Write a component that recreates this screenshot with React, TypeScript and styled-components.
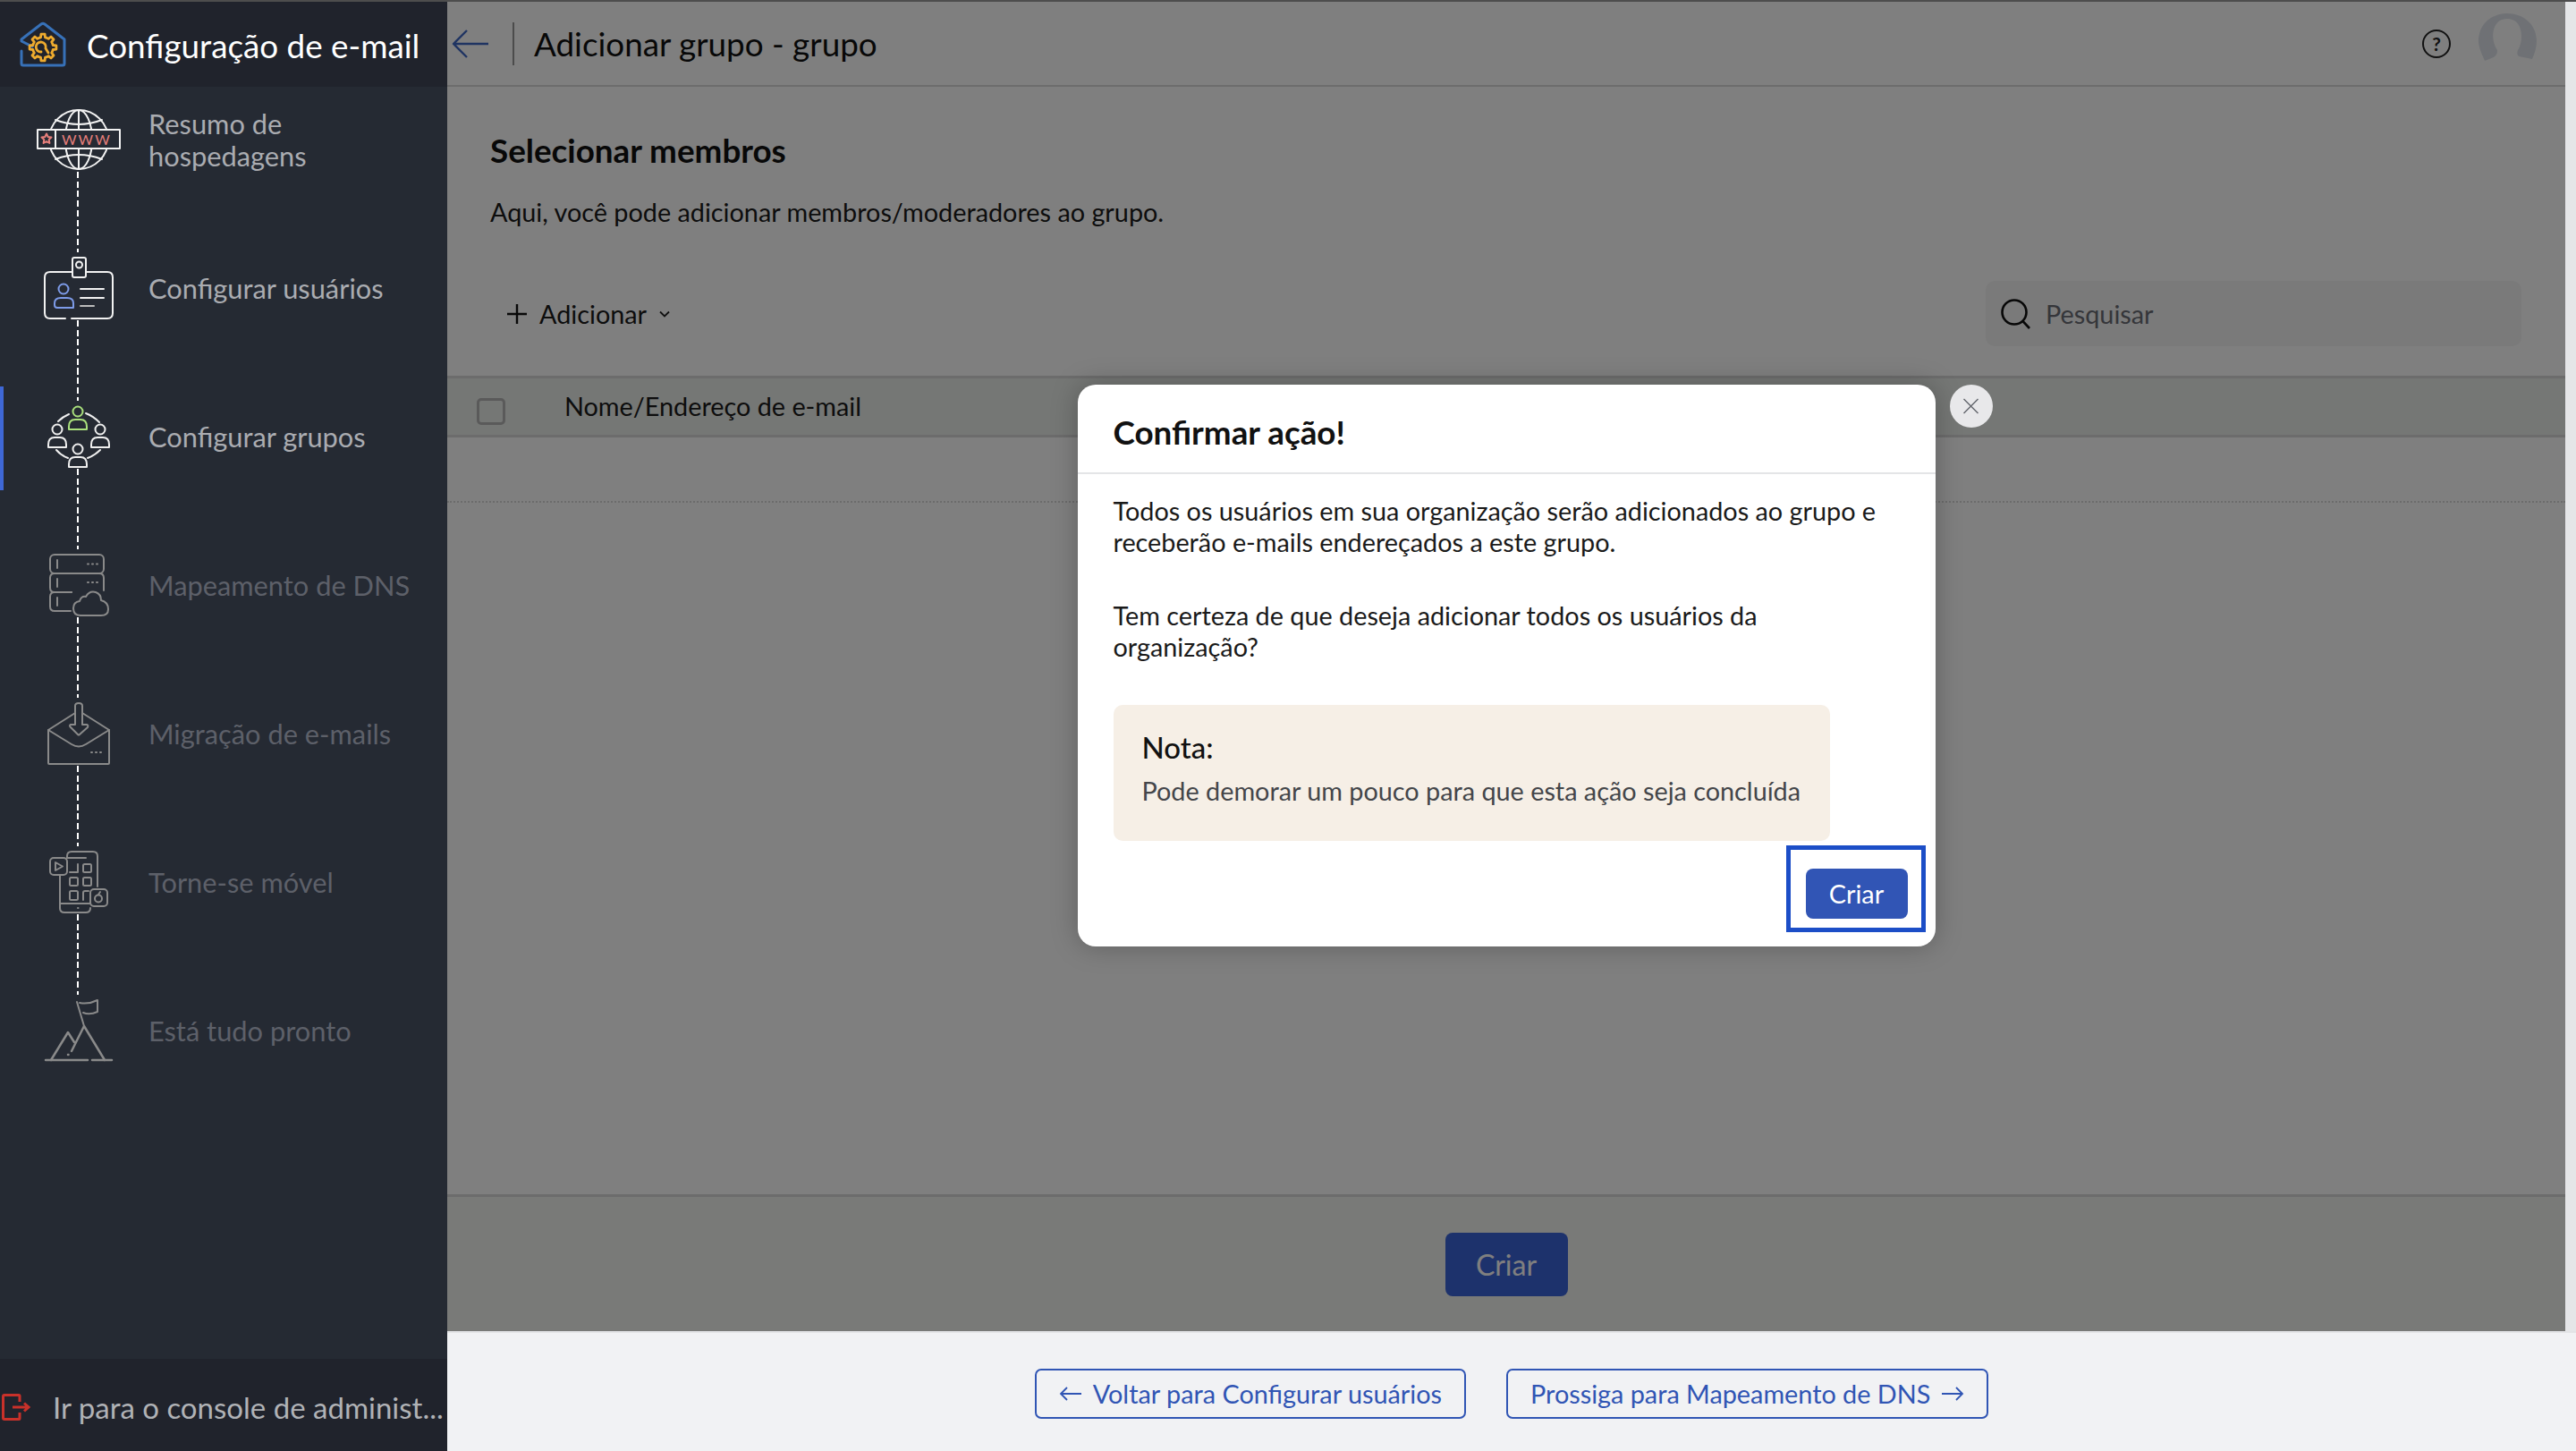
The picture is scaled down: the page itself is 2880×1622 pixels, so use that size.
import React from "react";
import styled, { createGlobalStyle } from "styled-components";

// gear outline for the logo, teeth are just a polygon around the centre
const gearPath = (cx: number, cy: number, outer: number, inner: number, teeth: number) => {
  const step = (Math.PI * 2) / teeth;
  const parts: string[] = [];
  for (let i = 0; i < teeth; i++) {
    const a = i * step - Math.PI / 2;
    const pts: [number, number][] = [
      [inner, a - step * 0.5],
      [inner, a - step * 0.28],
      [outer, a - step * 0.18],
      [outer, a + step * 0.18],
      [inner, a + step * 0.28],
    ];
    pts.forEach(([r, t]) => {
      const x = (cx + Math.cos(t) * r).toFixed(1);
      const y = (cy + Math.sin(t) * r).toFixed(1);
      parts.push(`${parts.length === 0 ? "M" : "L"}${x} ${y}`);
    });
  }
  return parts.join(" ") + " Z";
};

const Logo = () => (
  <LogoSvg viewBox="20 22 56 56">
    <path
      d="M36 52 L24 46 V44 L46 27 Q48 25.500 50 27 L72 44 V71 Q72 73 70 73 H26 Q24 73 24 71 V57"
      stroke="#3771b8"
      strokeWidth="3"
      strokeLinecap="round"
      strokeLinejoin="round"
    />
    <path d={gearPath(48, 53, 15, 11.500, 8)} stroke="#eeab2e" strokeWidth="2.800" strokeLinejoin="round" />
    <path d="M54 59 L51 54 A5.500 5.500 0 1 0 46 58" stroke="#eeab2e" strokeWidth="2.800" strokeLinecap="round" />
  </LogoSvg>
);

const GlobeIcon = () => (
  <StepSvg viewBox="0 0 100 100" $stroke="#f2f2f2">
    <circle cx="51" cy="48" r="33" />
    <ellipse cx="51" cy="48" rx="15" ry="33" />
    <path d="M51 15 V37 M51 58 V81" />
    <path d="M25 26 Q51 36 77 26 M25 70 Q51 60 77 70" />
    <rect x="5" y="37" width="92" height="21" fill="#252a33" />
    <path d="M25 37 V58" />
    <path
      d="M15 41.500 L16.700 45 L20.500 45.500 L17.700 48.100 L18.400 52 L15 50.100 L11.600 52 L12.300 48.100 L9.500 45.500 L13.300 45 Z"
      stroke="#e67f7b"
    />
    <WwwText x="32" y="53.500">
      WWW
    </WwwText>
  </StepSvg>
);

const CardIcon = () => (
  <StepSvg viewBox="0 0 100 100" $stroke="#f2f2f2">
    <path d="M36 82 H19 Q13 82 13 76 V36 Q13 30 19 30 H44 M59 30 H83 Q89 30 89 36 V76 Q89 82 83 82 H43" />
    <rect x="44" y="14" width="15" height="22" rx="2" />
    <circle cx="51.500" cy="22" r="3.500" />
    <g stroke="#7d9be8">
      <circle cx="34" cy="49" r="5.500" />
      <path d="M24 66 V65 Q24 59 31 59 H38 Q45 59 45 65 V70 H27 Q24 70 24 67 Z" />
    </g>
    <path d="M53 49 H79 M53 59 H79" />
    <path d="M53 68 H68" stroke="#bcbcbc" />
  </StepSvg>
);

const Person = ({ x, y, stroke }: { x: number; y: number; stroke?: string }) => (
  <g stroke={stroke}>
    <circle cx={x} cy={y} r="5.500" />
    <path
      d={`M${x - 10} ${y + 17} Q${x - 10} ${y + 9} ${x - 3} ${y + 9} H${x + 3} Q${x + 10} ${y + 9} ${x + 10} ${y + 17} V${
        y + 20
      } H${x - 10} Z`}
    />
  </g>
);

const GroupIcon = () => (
  <StepSvg viewBox="0 0 100 100" $stroke="#efefef">
    <Person x={50} y={20} stroke="#a9e07c" />
    <Person x={27} y={40} />
    <Person x={75} y={40} />
    <Person x={50} y={62} />
    <path d="M28 31 Q33 26 40 23 M59 22 Q67 25 74 32 M26 63 Q31 69 39 72 M61 72 Q69 69 75 63" />
  </StepSvg>
);

const ServerIcon = () => (
  <StepSvg viewBox="0 0 100 100" $stroke="#8a8a8a">
    <rect x="19" y="14" width="60" height="21" rx="5" />
    <path d="M43 56 H24 Q19 56 19 51 V40 Q19 35 24 35 H74 Q79 35 79 40 V54" />
    <path d="M43 56 H24 Q19 56 19 61 V72 Q19 77 24 77 H42" />
    <path d="M27 20 V29 M27 41 V50 M27 62 V71" />
    <path d="M61 24.500 H62 M66 24.500 H67 M71 24.500 H72 M61 45 H62 M66 45 H67 M71 45 H72" />
    <path
      d="M53 82 Q45 82 45 74 Q45 67 52 66 Q54 60 59 61 Q63 54 70 56 Q76 58 76 65 Q84 67 84 75 Q84 82 76 82 Z"
      fill="#252a33"
    />
  </StepSvg>
);

const MailIcon = () => (
  <StepSvg viewBox="0 0 100 100" $stroke="#8a8a8a">
    <path d="M47 25 L17 44 V81 Q17 82 18 82 H84 Q85 82 85 81 V44 L55 25" />
    <path d="M17 44 L43 60 Q51 65 59 60 L85 44" />
    <path d="M47 38 V17 Q47 14 51 14 Q55 14 55 17 V38 H60 Q62 39 61 41 L52 49 Q51 50 50 49 L42 41 Q40 39 42 38 Z" fill="#252a33" />
    <path d="M65 69 H66 M70 69 H71 M75 69 H76" />
  </StepSvg>
);

const MobileIcon = () => (
  <StepSvg viewBox="0 0 100 100" $stroke="#8a8a8a">
    <path d="M38 21 V19 Q38 14 43 14 H67 Q72 14 72 19 V53 M64 77 Q64 82 59 82 H35 Q30 82 30 77 V40" />
    <path d="M30 72 H64" />
    <path d="M38 21 H59" />
    <rect x="19" y="21" width="19" height="19" rx="4" />
    <path d="M25 26 V35 L33 30.500 Z" />
    <path d="M41 37 H50 V28" />
    <rect x="56" y="28" width="9" height="9" rx="1.500" />
    <rect x="41" y="43" width="9" height="9" rx="1.500" />
    <rect x="56" y="43" width="9" height="9" rx="1.500" />
    <rect x="41" y="58" width="9" height="10" rx="1.500" />
    <path d="M56 68 V60 Q56 58 58 58 H62" />
    <rect x="64" y="56" width="19" height="19" rx="4" />
    <circle cx="73" cy="66.500" r="4" />
    <path d="M73 62 L75 59" />
    <path d="M50 77 H50.500" />
  </StepSvg>
);

const FlagIcon = () => (
  <StepSvg viewBox="0 0 100 100" $stroke="#8a8a8a">
    <path d="M14 81 H61 M66 81 H88" strokeWidth="2.500" />
    <path d="M43 71 L57 43 L80 81" strokeWidth="2.500" />
    <path d="M20 81 L39 50 L46 61" strokeWidth="2.500" />
    <path d="M39 75 H39.500" strokeWidth="2.500" />
    <path d="M49 16 L57 43" />
    <path d="M52 17 Q62 19 72 14 V27 Q63 31 56 28" />
  </StepSvg>
);

const steps = [
  { label: "Resumo de hospedagens", icon: <GlobeIcon />, muted: false },
  { label: "Configurar usuários", icon: <CardIcon />, muted: false },
  { label: "Configurar grupos", icon: <GroupIcon />, muted: false, active: true },
  { label: "Mapeamento de DNS", icon: <ServerIcon />, muted: true },
  { label: "Migração de e-mails", icon: <MailIcon />, muted: true },
  { label: "Torne-se móvel", icon: <MobileIcon />, muted: true },
  { label: "Está tudo pronto", icon: <FlagIcon />, muted: true, last: true },
];

export default function App() {
  return (
    <>
      <GlobalStyle />
      <TopStrip />
      <Shell>
        <Sidebar>
          <SidebarHeader>
            <Logo />
            <SidebarTitle>Configuração de e-mail</SidebarTitle>
          </SidebarHeader>
          <StepList>
            {steps.map((step) => (
              <Step key={step.label} $active={step.active} $last={step.last}>
                {step.icon}
                <StepLabel $muted={step.muted}>{step.label}</StepLabel>
              </Step>
            ))}
          </StepList>
          <SidebarFooter>
            <ExitSvg viewBox="0 0 33 30">
              <path d="M20 9 V2.500 Q20 1.500 19 1.500 H3 Q1.500 1.500 1.500 3 V27 Q1.500 28.500 3 28.500 H19 Q20 28.500 20 27.500 V21" stroke="#c8312a" strokeWidth="3" />
              <path d="M12 15 H30 M25 10.500 L30 15 L25 19.500" stroke="#c8312a" strokeWidth="3" />
            </ExitSvg>
            <ExitLabel>Ir para o console de administ...</ExitLabel>
          </SidebarFooter>
        </Sidebar>

        <RightColumn>
          <MainRow>
            <Main>
              <TopBar>
                <BackSvg viewBox="0 0 42 32">
                  <path d="M41 16 H2 M17 1 L2 16 L17 31" stroke="#3f68c4" strokeWidth="2.400" strokeLinejoin="round" />
                </BackSvg>
                <TopDivider />
                <PageTitle>Adicionar grupo - grupo</PageTitle>
                <TopActions>
                  <HelpBadge>?</HelpBadge>
                  <AvatarSvg viewBox="0 0 65 58">
                    <path
                      d="M7 53 C2 42 0 36 0 31 C0 12 14 0 32 0 C50 0 65 12 65 31 C65 38 63 44 60 51 L45 48 C43 46 43 44 44 41 C51 30 50 6 32 6 C14 6 13 30 21 41 C21 45 20 47 17 49 Z"
                      fill="#dfe3ea"
                    />
                  </AvatarSvg>
                </TopActions>
              </TopBar>

              <Section>
                <SectionTitle>Selecionar membros</SectionTitle>
                <SectionText>Aqui, você pode adicionar membros/moderadores ao grupo.</SectionText>
              </Section>

              <Toolbar>
                <AddButton>
                  <PlusSvg viewBox="0 0 22 22">
                    <path d="M11 0 V22 M0 11 H22" stroke="#111" strokeWidth="2.400" />
                  </PlusSvg>
                  Adicionar
                  <CaretSvg viewBox="0 0 12 8">
                    <path d="M1 1.500 L6 6.500 L11 1.500" stroke="#222" strokeWidth="1.800" />
                  </CaretSvg>
                </AddButton>
                <SearchBox>
                  <SearchSvg viewBox="0 0 34 34">
                    <circle cx="15" cy="15" r="13.500" stroke="#111" strokeWidth="2.600" />
                    <path d="M24.500 25 L32 33" stroke="#111" strokeWidth="2.600" />
                  </SearchSvg>
                  <SearchHint>Pesquisar</SearchHint>
                </SearchBox>
              </Toolbar>

              <TableHead>
                <CheckBox />
                <ColumnName>Nome/Endereço de e-mail</ColumnName>
              </TableHead>
              <EmptyRow />

              <ActionBar>
                <PrimaryDim>Criar</PrimaryDim>
              </ActionBar>

              <Overlay>
                <Modal>
                  <CloseButton>
                    <svg viewBox="0 0 18 18" width="19" height="18" fill="none">
                      <path d="M1 1 L17 17 M17 1 L1 17" stroke="#62656b" strokeWidth="1.400" />
                    </svg>
                  </CloseButton>
                  <ModalHeader>Confirmar ação!</ModalHeader>
                  <ModalBody>
                    <Paragraph>
                      Todos os usuários em sua organização serão adicionados ao grupo e receberão e-mails endereçados a
                      este grupo.
                    </Paragraph>
                    <Paragraph>Tem certeza de que deseja adicionar todos os usuários da organização?</Paragraph>
                    <Note>
                      <NoteTitle>Nota:</NoteTitle>
                      <NoteText>Pode demorar um pouco para que esta ação seja concluída</NoteText>
                    </Note>
                    <ModalActions>
                      <Highlighted>
                        <PrimaryButton>Criar</PrimaryButton>
                      </Highlighted>
                    </ModalActions>
                  </ModalBody>
                </Modal>
              </Overlay>
            </Main>
            <ScrollTrack />
          </MainRow>

          <WizardFooter>
            <OutlineButton>
              <ArrowSvg viewBox="0 0 26 18">
                <path d="M25 9 H2 M9 2 L2 9 L9 16" stroke="#3055b4" strokeWidth="1.800" />
              </ArrowSvg>
              Voltar para Configurar usuários
            </OutlineButton>
            <OutlineButton>
              Prossiga para Mapeamento de DNS
              <ArrowSvg viewBox="0 0 26 18">
                <path d="M1 9 H24 M17 2 L24 9 L17 16" stroke="#3055b4" strokeWidth="1.800" />
              </ArrowSvg>
            </OutlineButton>
          </WizardFooter>
        </RightColumn>
      </Shell>
    </>
  );
}

const GlobalStyle = createGlobalStyle`
  html, body {
    margin: 0;
    padding: 0;
    background: #f1f2f4;
  }
  body {
    font-family: Lato, "Noto Sans", "Liberation Sans", sans-serif;
    overflow: hidden;
  }
  * {
    box-sizing: border-box;
  }
`;

const TopStrip = styled.div`
  height: 2px;
  background: #4d4d4d;
`;

const Shell = styled.div`
  display: flex;
  height: 1620px;
`;

// sidebar

const Sidebar = styled.aside`
  display: flex;
  flex-direction: column;
  width: 500px;
  flex-shrink: 0;
  background: #252a33;
`;

const SidebarHeader = styled.div`
  display: flex;
  align-items: center;
  gap: 21px;
  height: 95px;
  padding-left: 20px;
  background: #20232c;
`;

const LogoSvg = styled.svg`
  width: 56px;
  height: 56px;
  fill: none;
  flex-shrink: 0;
`;

const SidebarTitle = styled.div`
  font-size: 36.800px;
  color: #fff;
  padding-top: 2px;
  white-space: nowrap;
`;

const StepList = styled.div`
  flex: 1;
  display: flex;
  flex-direction: column;
  gap: 50px;
  padding-top: 3px;
`;

const Step = styled.div<{ $active?: boolean; $last?: boolean }>`
  position: relative;
  display: flex;
  align-items: center;
  gap: 29px;
  height: 116px;
  border-left: ${(p) => (p.$active ? "4px solid #3f68d6" : "0")};
  padding-left: ${(p) => (p.$active ? "33px" : "37px")};

  &::after {
    content: ${(p) => (p.$last ? "none" : '""')};
    position: absolute;
    left: 86px;
    top: 92px;
    width: 2px;
    height: 90px;
    margin-left: ${(p) => (p.$active ? "-4px" : "0")};
    background: repeating-linear-gradient(to bottom, #fff 0 7px, transparent 7px 10.700px);
  }
`;

const StepSvg = styled.svg<{ $stroke: string }>`
  width: 100px;
  height: 100px;
  flex-shrink: 0;
  fill: none;
  stroke: ${(p) => p.$stroke};
  stroke-width: 2;
  stroke-linecap: round;
  stroke-linejoin: round;
`;

const WwwText = styled.text`
  font-family: Lato, sans-serif;
  font-size: 16px;
  font-weight: 400;
  letter-spacing: 2px;
  fill: #e67f7b;
  stroke: none;
`;

const StepLabel = styled.div<{ $muted?: boolean }>`
  width: 300px;
  margin-top: -2px;
  font-size: 30.800px;
  line-height: 36px;
  color: ${(p) => (p.$muted ? "#5d6069" : "#aaacb1")};
`;

const SidebarFooter = styled.div`
  display: flex;
  align-items: center;
  gap: 24px;
  height: 103px;
  padding: 4px 0 0 2px;
  background: #20232c;
`;

const ExitSvg = styled.svg`
  width: 33px;
  height: 30px;
  fill: none;
  flex-shrink: 0;
`;

const ExitLabel = styled.div`
  font-size: 33px;
  color: #b0b2b6;
  white-space: nowrap;
`;

// main column

const RightColumn = styled.div`
  flex: 1;
  display: flex;
  flex-direction: column;
  min-width: 0;
`;

const MainRow = styled.div`
  flex: 1;
  display: flex;
  min-height: 0;
`;

const Main = styled.main`
  position: relative;
  flex: 1;
  display: flex;
  flex-direction: column;
  background: #fff;
  min-width: 0;
`;

const ScrollTrack = styled.div`
  width: 12px;
  background: #e5e6e8;
`;

const TopBar = styled.header`
  display: flex;
  align-items: center;
  height: 95px;
  padding-left: 5px;
  border-bottom: 2px solid #d8d8d8;
`;

const BackSvg = styled.svg`
  width: 42px;
  height: 32px;
  fill: none;
`;

const TopDivider = styled.div`
  width: 2px;
  height: 48px;
  margin-left: 26px;
  background: #999;
`;

const PageTitle = styled.h1`
  margin: 0 0 0 22px;
  font-size: 36.800px;
  font-weight: 400;
  color: #111;
`;

const TopActions = styled.div`
  margin-left: auto;
  display: flex;
  align-items: center;
  gap: 31px;
  padding-right: 32px;
`;

const HelpBadge = styled.div`
  display: flex;
  align-items: center;
  justify-content: center;
  width: 32px;
  height: 32px;
  border: 2px solid #222;
  border-radius: 50%;
  font-size: 21px;
  font-weight: 700;
  color: #222;
`;

const AvatarSvg = styled.svg`
  width: 65px;
  height: 58px;
  margin-top: -10px;
`;

const Section = styled.section`
  padding: 49px 48px 0;
`;

const SectionTitle = styled.h2`
  margin: 0;
  font-size: 36.800px;
  line-height: 44px;
  font-weight: 700;
  color: #111;
`;

const SectionText = styled.p`
  margin: 27px 0 0;
  font-size: 28.800px;
  line-height: 40px;
  color: #1a1a1a;
`;

const Toolbar = styled.div`
  display: flex;
  align-items: center;
  justify-content: space-between;
  margin-top: 57px;
  padding: 0 49px 0 67px;
`;

const AddButton = styled.div`
  display: flex;
  align-items: center;
  font-size: 28.800px;
  color: #1a1a1a;
`;

const PlusSvg = styled.svg`
  width: 22px;
  height: 22px;
  margin-right: 14px;
  fill: none;
`;

const CaretSvg = styled.svg`
  width: 12px;
  height: 8px;
  margin-left: 14px;
  fill: none;
`;

const SearchBox = styled.div`
  display: flex;
  align-items: center;
  gap: 16px;
  width: 599px;
  height: 73px;
  padding-left: 17px;
  border-radius: 10px;
  background: #f4f4f4;
`;

const SearchSvg = styled.svg`
  width: 34px;
  height: 34px;
  fill: none;
`;

const SearchHint = styled.span`
  font-size: 28.800px;
  color: #6a6c74;
`;

const TableHead = styled.div`
  display: flex;
  align-items: center;
  height: 69px;
  margin-top: 33px;
  padding-left: 33px;
  background: #ebeeeb;
  border-top: 3px solid #d8d8d8;
  border-bottom: 3px solid #d8d8d8;
`;

const CheckBox = styled.div`
  width: 32px;
  height: 30px;
  margin-top: 10px;
  border: 3px solid #b4b4b4;
  border-radius: 5px;
`;

const ColumnName = styled.div`
  margin: -2px 0 0 66px;
  font-size: 28.800px;
  color: #1a1a1a;
`;

const EmptyRow = styled.div`
  height: 73px;
  border-bottom: 2px dotted #d8d8d8;
`;

const ActionBar = styled.div`
  display: flex;
  align-items: center;
  justify-content: center;
  height: 153px;
  margin-top: auto;
  background: #f2f4f0;
  border-top: 3px solid #d8d8d8;
`;

const PrimaryDim = styled.button`
  width: 137px;
  height: 71px;
  border: 0;
  border-radius: 8px;
  font: 400 32px Lato, sans-serif;
  color: #fff;
  background: #3a64d8;
`;

const Overlay = styled.div`
  position: absolute;
  inset: 0;
  display: flex;
  align-items: center;
  justify-content: center;
  background: rgba(0, 0, 0, 0.5);
`;

const Modal = styled.div`
  position: relative;
  width: 959px;
  height: 628px;
  margin-top: -2px;
  border-radius: 20px;
  background: #fff;
  box-shadow: 0 0 30px rgba(0, 0, 0, 0.25);
`;

const CloseButton = styled.div`
  position: absolute;
  top: 0;
  left: calc(100% + 16px);
  display: flex;
  align-items: center;
  justify-content: center;
  width: 48px;
  height: 48px;
  border-radius: 50%;
  background: #e8e8ea;
`;

const ModalHeader = styled.div`
  height: 100px;
  padding: 30px 40px 0;
  font-size: 36.800px;
  line-height: 46px;
  font-weight: 700;
  color: #111;
  border-bottom: 2px solid #e4e5e7;
`;

const ModalBody = styled.div`
  padding: 24px 31px 0 40px;
`;

const Paragraph = styled.p`
  max-width: 880px;
  margin: 0 0 47px;
  font-size: 28.800px;
  line-height: 35px;
  color: #1a1a1a;
`;

const Note = styled.div`
  width: fit-content;
  margin-top: 39px;
  padding: 28px 33px 38px 32px;
  border-radius: 10px;
  background: #f6efe6;
`;

const NoteTitle = styled.div`
  font-size: 33px;
  line-height: 38px;
  font-weight: 500;
  color: #111;
`;

const NoteText = styled.div`
  margin-top: 12px;
  font-size: 28.800px;
  line-height: 36px;
  color: #44464a;
`;

const ModalActions = styled.div`
  display: flex;
  justify-content: flex-end;
  margin-top: 31px;
`;

const Highlighted = styled.div`
  position: relative;

  &::after {
    content: "";
    position: absolute;
    top: -26px;
    right: -20px;
    bottom: -15px;
    left: -22px;
    border: 5px solid #1c4ec7;
    pointer-events: none;
  }
`;

const PrimaryButton = styled.button`
  display: block;
  width: 114px;
  height: 56px;
  border: 0;
  border-radius: 8px;
  font: 400 28.800px Lato, sans-serif;
  color: #fff;
  background: #3155b5;
`;

// wizard footer

const WizardFooter = styled.footer`
  display: flex;
  align-items: center;
  justify-content: center;
  gap: 45px;
  height: 134px;
  padding-top: 3px;
  background: #f1f2f4;
  border-top: 2px solid #e3e4e6;
`;

const OutlineButton = styled.div`
  display: flex;
  align-items: center;
  gap: 12px;
  height: 56px;
  padding: 0 25px;
  border: 2px solid #3055b4;
  border-radius: 7px;
  font-size: 28.800px;
  color: #3055b4;
`;

const ArrowSvg = styled.svg`
  width: 26px;
  height: 18px;
  fill: none;
`;
